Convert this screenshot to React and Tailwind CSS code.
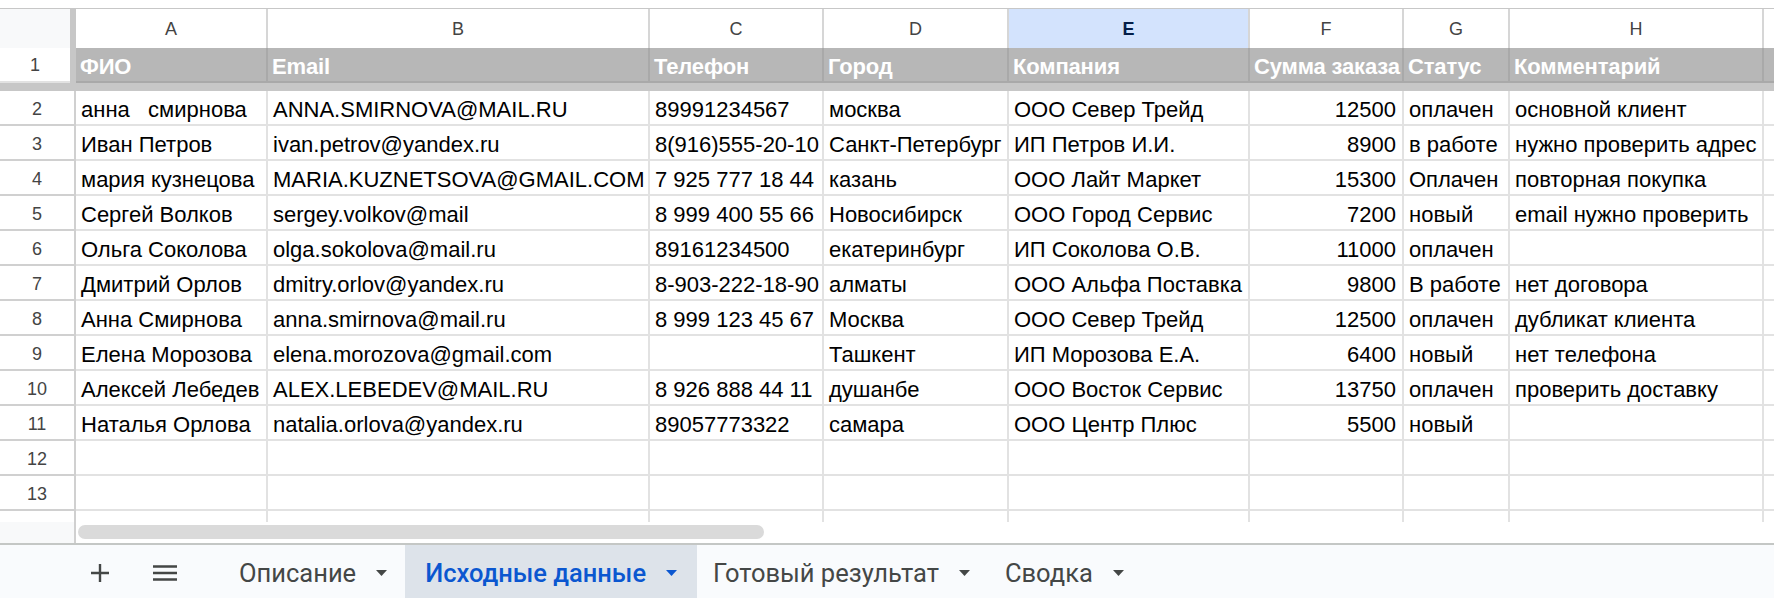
import React from 'react';

const cols = [
  { key: 'A', w: 'w-[192px]' },
  { key: 'B', w: 'w-[382px]' },
  { key: 'C', w: 'w-[174px]' },
  { key: 'D', w: 'w-[185px]' },
  { key: 'E', w: 'w-[241px]' },
  { key: 'F', w: 'w-[154px]', right: true },
  { key: 'G', w: 'w-[106px]' },
  { key: 'H', w: 'w-[254px]' },
  { key: '', w: 'w-[12px]' },
];

const head = ['ФИО', 'Email', 'Телефон', 'Город', 'Компания', 'Сумма заказа', 'Статус', 'Комментарий', ''];

const rows = [
  ['анна   смирнова', 'ANNA.SMIRNOVA@MAIL.RU', '89991234567', 'москва', 'ООО Север Трейд', '12500', 'оплачен', 'основной клиент'],
  ['Иван Петров', 'ivan.petrov@yandex.ru', '8(916)555-20-10', 'Санкт-Петербург', 'ИП Петров И.И.', '8900', 'в работе', 'нужно проверить адрес'],
  ['мария кузнецова', 'MARIA.KUZNETSOVA@GMAIL.COM', '7 925 777 18 44', 'казань', 'ООО Лайт Маркет', '15300', 'Оплачен', 'повторная покупка'],
  ['Сергей Волков', 'sergey.volkov@mail', '8 999 400 55 66', 'Новосибирск', 'ООО Город Сервис', '7200', 'новый', 'email нужно проверить'],
  ['Ольга Соколова', 'olga.sokolova@mail.ru', '89161234500', 'екатеринбург', 'ИП Соколова О.В.', '11000', 'оплачен', ''],
  ['Дмитрий Орлов', 'dmitry.orlov@yandex.ru', '8-903-222-18-90', 'алматы', 'ООО Альфа Поставка', '9800', 'В работе', 'нет договора'],
  ['Анна Смирнова', 'anna.smirnova@mail.ru', '8 999 123 45 67', 'Москва', 'ООО Север Трейд', '12500', 'оплачен', 'дубликат клиента'],
  ['Елена Морозова', 'elena.morozova@gmail.com', '', 'Ташкент', 'ИП Морозова Е.А.', '6400', 'новый', 'нет телефона'],
  ['Алексей Лебедев', 'ALEX.LEBEDEV@MAIL.RU', '8 926 888 44 11', 'душанбе', 'ООО Восток Сервис', '13750', 'оплачен', 'проверить доставку'],
  ['Наталья Орлова', 'natalia.orlova@yandex.ru', '89057773322', 'самара', 'ООО Центр Плюс', '5500', 'новый', ''],
  ['', '', '', '', '', '', '', ''],
  ['', '', '', '', '', '', '', ''],
];

// отступы подобраны по скриншоту
const tabs = [
  { name: 'Описание', pad: 'pl-[20px] pr-[18px]' },
  { name: 'Исходные данные', pad: 'pl-[20px] pr-[20px]', active: true },
  { name: 'Готовый результат', pad: 'pl-[16px] pr-[17px]' },
  { name: 'Сводка', pad: 'pl-[18px] pr-[20px]' },
];

function Caret({ className }) {
  return (
    <svg width="11" height="6" viewBox="0 0 11 6" className={className}>
      <path d="M0 0h11L5.5 6z" fill="currentColor" />
    </svg>
  );
}

export default function App() {
  return (
    <div className="w-[1774px] h-[598px] overflow-hidden bg-white flex flex-col font-['Liberation_Sans',Arial,sans-serif]">
      {/* верхняя полоса */}
      <div className="h-[9px] shrink-0 border-b border-[#c7c7c7]" />

      {/* буквы столбцов */}
      <div className="h-[39px] shrink-0 flex">
        <div className="w-[70px] shrink-0 bg-[#f8f9fa]" />
        <div className="w-[6px] shrink-0 bg-[#c7c7c7]" />
        {cols.map(({ key, w }) => (
          <div
            key={key || 'x'}
            className={`${w} shrink-0 border-r-2 border-[#d6d6d6] flex items-center justify-center pt-[1px] text-[18px] ${
              key === 'E' ? 'bg-[#d3e3fd] text-[#041e49] font-bold' : 'text-[#444]'
            }`}
          >
            {key}
          </div>
        ))}
      </div>

      {/* строка 1 — заголовки */}
      <div className="h-[35px] shrink-0 flex">
        <div className="w-[70px] shrink-0 flex items-center justify-center pt-[2px] text-[18px] text-[#444] border-b-2 border-[#e2e2e2]">1</div>
        <div className="w-[6px] shrink-0 bg-[#c7c7c7]" />
        {cols.map(({ key, w }, i) => (
          <div
            key={key || 'x'}
            className={`${w} shrink-0 bg-[#b7b7b7] border-r-2 border-b-2 border-[#a9a9a9] flex items-center pl-[4px] pt-[4px] text-white font-bold text-[22px] tracking-[-0.15px] whitespace-nowrap overflow-hidden`}
          >
            {head[i]}
          </div>
        ))}
      </div>

      {/* закреплённая строка */}
      <div className="h-[8px] shrink-0 bg-[#c7c7c7]" />

      {/* данные */}
      {rows.map((row, r) => (
        <div key={r} className="h-[35px] shrink-0 flex">
          <div className="w-[76px] shrink-0 border-r-2 border-b-2 border-[#d0d0d0] flex items-center justify-center text-[18px] text-[#444] pt-[3px]">
            {r + 2}
          </div>
          {cols.map(({ key, w, right }, i) => (
            <div
              key={key || 'x'}
              className={`${w} shrink-0 border-r-2 border-b-2 border-[#e2e2e2] flex items-center pt-[4px] text-[22px] text-black whitespace-pre overflow-hidden ${
                right ? 'justify-end pr-[6px]' : 'pl-[5px]'
              }`}
            >
              {row[i] || ''}
            </div>
          ))}
        </div>
      ))}

      {/* хвост сетки */}
      <div className="h-[11px] shrink-0 flex">
        <div className="w-[76px] shrink-0 border-r-2 border-[#d0d0d0]" />
        {cols.map(({ key, w }) => (
          <div key={key || 'x'} className={`${w} shrink-0 border-r-2 border-[#e2e2e2]`} />
        ))}
      </div>

      {/* горизонтальная прокрутка */}
      <div className="h-[21px] shrink-0 flex">
        <div className="w-[76px] shrink-0 bg-[#f8f9fa] border-r-2 border-[#d0d0d0]" />
        <div className="ml-[2px] mt-[3px] w-[686px] h-[14px] rounded-full bg-[#dadada]" />
      </div>

      {/* листы */}
      <div className="flex-1 flex items-stretch bg-[#f9fbfd] border-t-2 border-[#c4c7c5] font-['Roboto',sans-serif] text-[#444746]">
        <div className="w-[75px] shrink-0" />
        <div className="w-[50px] flex items-center justify-center pt-[3px]">
          <svg width="18" height="18" viewBox="0 0 18 18">
            <path d="M9 0v18M0 9h18" stroke="#444746" strokeWidth="2.4" />
          </svg>
        </div>
        <div className="w-[80px] flex items-center justify-center pt-[3px]">
          <svg width="24" height="16" viewBox="0 0 24 16">
            <path d="M0 1.5h24M0 8h24M0 14.5h24" stroke="#444746" strokeWidth="2.4" />
          </svg>
        </div>
        <div className="flex items-stretch pl-[14px]">
          {tabs.map(({ name, active, pad }) => (
            <div
              key={name}
              className={`flex items-center gap-[20px] ${pad} pt-[3px] text-[25.5px] ${
                active ? 'bg-[#dde3ea] text-[#0b57d0] font-medium' : ''
              }`}
            >
              <span>{name}</span>
              <Caret className={active ? 'text-[#0b57d0]' : 'text-[#444746]'} />
            </div>
          ))}
        </div>
      </div>
    </div>
  );
}
